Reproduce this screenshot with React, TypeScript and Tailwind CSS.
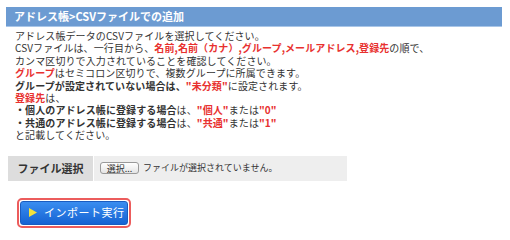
import React from "react";

const R = ({ children }: { children: React.ReactNode }) => (
  <span className="font-bold text-[#e8312f]">{children}</span>
);
const B = ({ children }: { children: React.ReactNode }) => (
  <span className="font-bold">{children}</span>
);

export default function App() {
  return (
    <div
      className="w-[510px] h-[240px] bg-white text-[#333]"
      style={{ fontFamily: '"Noto Sans CJK JP", "Noto Sans", sans-serif' }}
    >
      <div className="pt-[7px] pl-[6px] w-[502px]">
        <div className="h-[20px] bg-[#6c9bd2] border-b border-[#a9c6e8] flex items-center pl-[8px] text-white font-bold text-[11px] leading-none">
          アドレス帳&gt;CSVファイルでの追加
        </div>
        <div className="pl-[9px] pt-[3px] text-[10px] leading-[12.4px] tracking-[0.1px]">
          <div>アドレス帳データのCSVファイルを選択してください。</div>
          <div>
            CSVファイルは、一行目から、<R>名前,名前（カナ）,グループ,メールアドレス,登録先</R>の順で、
          </div>
          <div>カンマ区切りで入力されていることを確認してください。</div>
          <div>
            <R>グループ</R>はセミコロン区切りで、複数グループに所属できます。
          </div>
          <div>
            <B>グループが設定されていない場合は、</B>
            <R>"未分類"</R>に設定されます。
          </div>
          <div>
            <R>登録先</R>は、
          </div>
          <div>
            <B>・個人のアドレス帳に登録する場合</B>は、<R>"個人"</R>または<R>"0"</R>
          </div>
          <div>
            <B>・共通のアドレス帳に登録する場合</B>は、<R>"共通"</R>または<R>"1"</R>
          </div>
          <div>と記載してください。</div>
        </div>
        <div className="mt-[14px] ml-[2px] flex w-[339px] h-[25px] text-[10px]">
          <div className="w-[85px] bg-[#dddddd] flex items-center justify-center font-bold text-[11px]">
            ファイル選択
          </div>
          <div className="flex-1 ml-px bg-[#eeeeee] flex items-center pl-[6px] gap-[4px]">
            <div className="h-[12px] w-[39px] rounded-[3px] border border-[#999] bg-gradient-to-b from-white to-[#e4e4e4] flex items-center justify-center text-[9px] leading-none">
              選択...
            </div>
            <span className="text-[9px]">ファイルが選択されていません。</span>
          </div>
        </div>
        <div className="mt-[17px] ml-[11px] w-[114px] h-[30px] rounded-[5px] border-2 border-[#ec5c5c] p-[1px]">
          <div className="h-full rounded-[3px] bg-gradient-to-b from-[#3a8df0] to-[#1563d3] border border-[#1a5cc0] flex items-center pl-[8px] gap-[7px] text-white text-[11px]">
            <svg width="8" height="9" viewBox="0 0 8 9">
              <polygon points="0,0 8,4.5 0,9" fill="#f4e23c" />
            </svg>
            <span className="tracking-[0.5px]">インポート実行</span>
          </div>
        </div>
      </div>
    </div>
  );
}
